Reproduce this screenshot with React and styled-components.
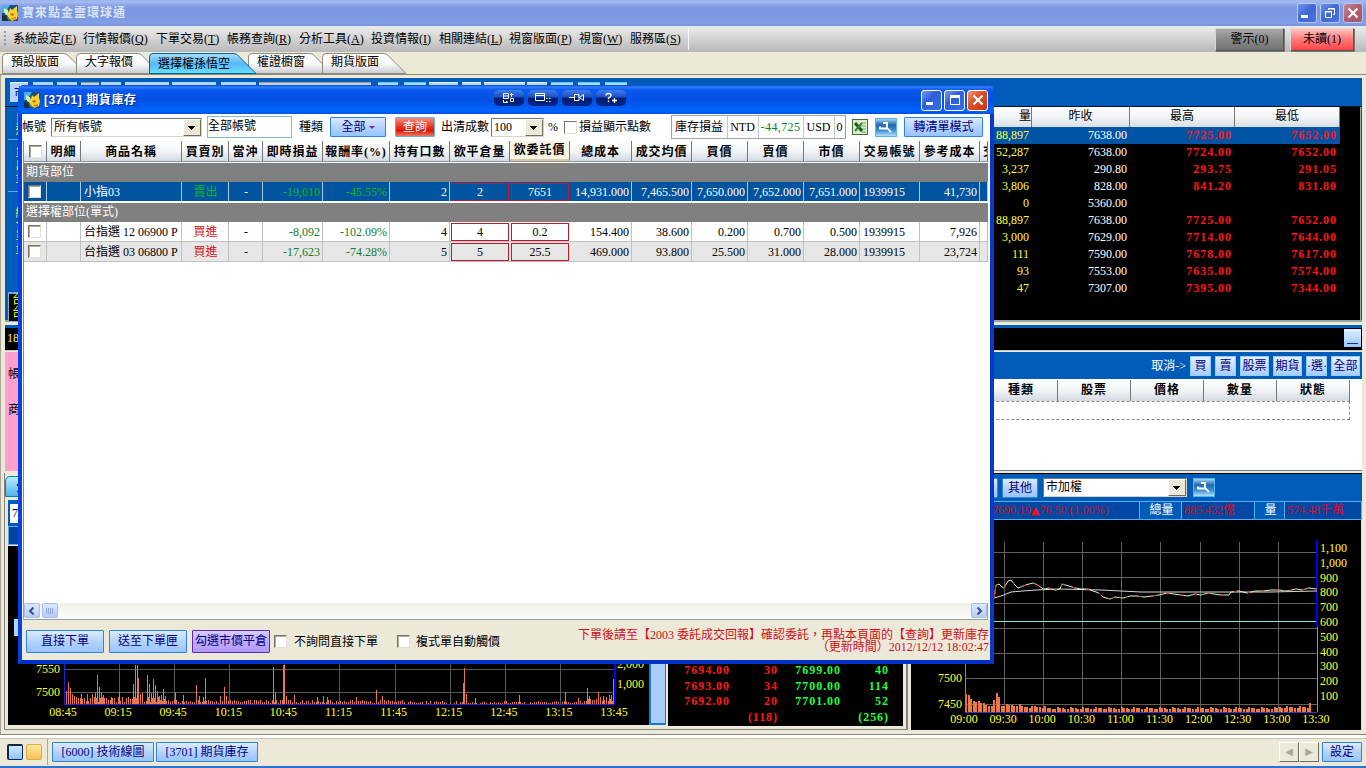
import React, { useState } from 'react';
import styled, { createGlobalStyle, css } from 'styled-components';

const GlobalStyle = createGlobalStyle`
  * {
    box-sizing: border-box;
  }
  body {
    margin: 0;
    overflow: hidden;
    font-family: 'Liberation Serif', 'Noto Sans CJK TC', serif;
    font-size: 12px;
    line-height: 14px;
    color: #000;
    background: #ece9d8;
  }
  svg {
    display: block;
  }
`;

const Desktop = styled.div`
  position: relative;
  display: flex;
  flex-direction: column;
  width: 1366px;
  height: 768px;
  overflow: hidden;
  white-space: nowrap;
  background: #ece9d8;
`;

/* ---------- main title bar ---------- */

const TitleBar = styled.div`
  display: flex;
  align-items: center;
  flex: none;
  height: 26px;
  padding: 0 3px 0 2px;
  background: linear-gradient(#9cb4ee 0, #a3bbf1 2px, #7f9ae1 7px, #7b97e0 16px, #829fe8 23px, #7590dc 100%);
`;

const TitleText = styled.div`
  flex: 1;
  margin-left: 4px;
  font: bold 12px/16px 'Liberation Sans', 'Noto Sans CJK TC', sans-serif;
  letter-spacing: ${props => (props.$active ? 0.6 : 1)}px;
  color: ${props => (props.$active ? '#fff' : '#d8e4f8')};
  text-shadow: ${props => (props.$active ? '1px 1px 0 #0a2a90' : 'none')};
`;

const WindowButtons = styled.div`
  display: flex;
  gap: ${props => props.$gap}px;
`;

const buttonFill = {
  blue: 'linear-gradient(135deg, #7a9cf0, #2d5fdc 40%, #3a6be8)',
  close: 'linear-gradient(135deg, #f09a7c, #dd4a22 45%, #c83a14)',
  dimBlue: 'linear-gradient(135deg, #6c90e8, #4068d4 50%, #4c74e0)',
  dimClose: 'linear-gradient(135deg, #c88896, #b05c6c 50%, #a85868)',
};

const WindowButton = styled.div`
  width: ${props => props.$size}px;
  height: ${props => props.$size}px;
  border: 1px solid ${props => (props.$kind.startsWith('dim') ? '#b4c6f4' : '#fff')};
  border-radius: 3px;
  background: ${props => buttonFill[props.$kind]};
  display: flex;
  align-items: center;
  justify-content: center;
`;

/* ---------- menu ---------- */

const MenuBar = styled.div`
  display: flex;
  align-items: center;
  flex: none;
  height: 26px;
  padding: 0 12px 0 4px;
  background: linear-gradient(#ececec, #d8d8d8 40%, #b8b8b8);
`;

const Grip = styled.div`
  width: 2px;
  height: 16px;
  margin-right: 7px;
  background: repeating-linear-gradient(#9a9a9a 0 2px, transparent 2px 4px);
`;

const MenuItem = styled.div`
  width: ${props => props.$width}px;
  u {
    text-underline-offset: 1px;
  }
`;

const MenuEnd = styled.div`
  flex: 1;
  height: 22px;
  margin-left: 8px;
  border-left: 1px solid #f6f6f6;
`;

const NoticeButton = styled.div`
  width: ${props => props.$width}px;
  height: 23px;
  margin-left: 6px;
  line-height: 20px;
  text-align: center;
  border: 1px solid;
  border-color: #d8d8d8 #555 #555 #d8d8d8;
  box-shadow: 1px 1px 0 #777;
  background: ${props =>
    props.$alert
      ? 'linear-gradient(#ffc4c0, #ff8080 45%, #ff4444)'
      : 'linear-gradient(#a8a8a8, #8c8c8c 45%, #727272)'};
`;

/* ---------- layout tabs ---------- */

const TabRow = styled.div`
  display: flex;
  flex: none;
  height: 23px;
  padding: 1px 0 0 2px;
  border-bottom: 1px solid #8c8b80;
`;

const Tab = styled.div`
  position: relative;
  z-index: ${props => (props.$active ? 2 : 1)};
  width: ${props => props.$width}px;
  height: 21px;
  padding: ${props => (props.$active ? '4px' : '2px')} 0 0 9px;

  svg {
    position: absolute;
    left: 0;
    top: 0;
    z-index: -1;
    overflow: visible;
  }
`;

/* ---------- workspace ---------- */

const Workspace = styled.div`
  display: flex;
  flex-direction: column;
  flex: none;
  height: 659px;
  padding: 3px 4px 0;
  border-left: 1px solid #a8a597;
`;

const QuotePanel = styled.div`
  flex: none;
  height: 244px;
  display: flex;
  flex-direction: column;
  background: #005cb8;
  border-bottom: 2px solid #98a4a8;
`;

const QuoteToolbar = styled.div`
  display: flex;
  align-items: flex-start;
  height: 28px;
  padding: 4px 0 0 5px;
`;

const ToolChip = styled.div`
  width: ${props => props.$width}px;
  height: 20px;
  margin-right: ${props => props.$gap}px;
  padding: 3px 0 0 4px;
  overflow: hidden;
  color: #00007c;
  background: #b4d4ff;
  border-top: 1px solid ${props => props.$edge || '#9cd8f8'};
`;

const QuoteBody = styled.div`
  display: flex;
  flex: 1;
  min-height: 0;
  border-top: 1px solid #001428;
`;

const SideStrip = styled.div`
  display: flex;
  flex-direction: column;
  width: 30px;
  margin-left: 3px;
  color: #f0ff20;
`;

const SideTab = styled.div`
  flex: none;
  height: ${props => props.$height}px;
  padding: ${props => props.$top}px 0 0 5px;
  line-height: 13px;
  border-bottom: 1px solid #60a8e8;
  writing-mode: vertical-lr;
`;

const SideList = styled.div`
  flex: none;
  height: 28px;
  padding: 0 0 0 3px;
  line-height: 13px;
  background: #000;
  border: 1px solid #88a8c0;
  border-bottom: 0;
`;

const QuoteTable = styled.div`
  flex: 1;
  padding-right: 20px;
  background: #000;
  border-right: 1px solid #9aa;
  margin-right: 1px;
`;

const QuoteRow = styled.div`
  display: grid;
  grid-template-columns: 1fr 98px 105px 105px;
  height: ${props => (props.$head ? 20 : 17)}px;
  line-height: ${props => (props.$head ? 18 : 17)}px;
  text-align: ${props => (props.$head ? 'center' : 'right')};
  background: ${props => (props.$selected ? '#0054a6' : 'transparent')};
  ${props => props.$head && css`
    background: linear-gradient(#fff, #f2f5f8 50%, #d6dee6);
    > div {
      border-right: 1px solid #777;
    }
    > div:first-child {
      text-align: right;
    }
  `}
`;

const quoteColors = { volume: '#ffff30', close: '#fff', high: '#ff1414' };

const QuoteCell = styled.div`
  padding-right: 3px;
  color: ${props => quoteColors[props.$kind]};
  ${props => props.$kind === 'high' && css`
    font-weight: bold;
    letter-spacing: 0.95px;
  `}
`;

const TickerBar = styled.div`
  display: flex;
  flex: none;
  justify-content: space-between;
  height: 26px;
  margin-top: 3px;
  padding: 3px 1px 0 2px;
  color: #ffff30;
  background: #000;
  border: 0 solid #005cb8;
  border-width: 3px 0 0;
  border-bottom: 1px solid #c8c8c8;
`;

const MiniButton = styled.div`
  width: 17px;
  height: 18px;
  margin-top: -2px;
  padding: 14px 3px 0 3px;
  background: linear-gradient(#e0f0ff, #98c4ff);

  &::after {
    content: '';
    display: block;
    height: 1px;
    background: #203060;
  }
`;

const OrderPanel = styled.div`
  display: flex;
  flex: none;
  height: 119px;
  margin-top: 1px;
`;

const OrderForm = styled.div`
  flex: none;
  width: 300px;
  padding: 15px 3px;
  background: #ff9fcf;
`;

const FormLabel = styled.div`
  height: 36px;
`;

const OrderList = styled.div`
  flex: 1;
  background: #fff;
  border-bottom: 1px solid #708090;
`;

const OrderTools = styled.div`
  display: flex;
  align-items: center;
  justify-content: flex-end;
  gap: 4px;
  height: 27px;
  padding-right: 2px;
  color: #fff;
  background: #005cb8;
`;

const SmallButton = styled.div`
  width: ${props => props.$width}px;
  height: 20px;
  overflow: hidden;
  line-height: 18px;
  text-align: center;
  color: #00007c;
  background: linear-gradient(#e4f0ff, #a8ccff);
  border: 1px solid #8cd0ff;
`;

const OrderHead = styled.div`
  display: grid;
  grid-template-columns: 1fr repeat(4, 73px);
  height: 21px;
  margin: 1px 12px 0 0;
  font-weight: bold;
  letter-spacing: 1px;
  line-height: 20px;
  text-align: center;
  background: linear-gradient(#fff, #f2f5f8 50%, #d2d9e0);
  > div {
    border-right: 1px solid #777;
  }
  > div:first-child {
    padding-right: 23px;
    text-align: right;
  }
`;

const OrderEmptyRow = styled.div`
  height: 19px;
  margin-right: 12px;
  border: 1px dashed #888;
`;

const BottomPanes = styled.div`
  display: flex;
  flex: 1;
  margin-top: 2px;
`;

const LeftPane = styled.div`
  display: flex;
  flex-direction: column;
  flex: none;
  width: 904px;
  height: 257px;
  margin-left: -1px;
  border: 1px solid #85837a;
  border-top: 0;
  border-width: 0 2px 1px 1px;
`;

const BlueTab = styled.div`
  flex: none;
  width: 110px;
  height: 21px;
  margin-top: 3px;
  padding: 3px 0 0 10px;
  border: 1px solid #0080b8;
  border-radius: 5px 5px 0 0;
  background: linear-gradient(#b8ecff, #50b4ec);
`;

const FieldStrip = styled.div`
  flex: none;
  height: 26px;
  margin: 3px 0 0 3px;
  padding: 4px 0 0 2px;
  background: #005cb8;
`;

const SymbolInput = styled.div`
  width: 100px;
  height: 19px;
  padding: 2px;
  background: #fff;
`;

const HeadStrip = styled.div`
  flex: none;
  height: 19px;
  margin-left: 3px;
  background: #0044a0;
  border: 1px solid #60a8e8;
`;

const LeftCharts = styled.div`
  display: flex;
  flex: 1;
  min-height: 0;
  margin: 1px 3px 3px;
`;

const Splitter = styled.div`
  width: 17px;
  height: 179px;
  margin-right: 2px;
  background: #a8ceff;
  border: 1px solid #1478d4;
  border-width: 1px 1px 2px 2px;
`;

const BookTable = styled.div`
  display: grid;
  grid-template-columns: 62px 48px 63px 48px;
  grid-auto-rows: 15.8px;
  align-content: end;
  flex: 1;
  padding-bottom: 1px;
  font-weight: bold;
  letter-spacing: 0.95px;
  line-height: 16px;
  text-align: right;
  background: #000;
`;

const BookCell = styled.div`
  color: ${props => (props.$side === 'buy' ? '#ff1818' : '#20ff40')};
`;

const RightPane = styled.div`
  flex: 1;
  margin-left: 3px;
  border-top: 1px solid #000;
  overflow: hidden;
`;

const IndexTools = styled.div`
  display: flex;
  align-items: center;
  height: 27px;
  padding-left: 51px;
  background: #005cb8;
`;

const IndexInfo = styled.div`
  display: flex;
  height: 19px;
  line-height: 16px;
  color: #fff;
  background: #0048a4;
  border: 1px solid #50b0f0;
  border-width: 1px 0;
`;

const InfoCell = styled.div`
  width: ${props => props.$width}px;
  padding-left: ${props => props.$pad || 2}px;
  text-align: ${props => (props.$label ? 'center' : 'left')};
  color: ${props => (props.$label ? '#fff' : '#d80c28')};
  background: ${props => (props.$label ? '#005cb8' : 'transparent')};
  border-right: 1px solid #50b0f0;
`;

const UpMark = styled.span`
  font: 11px/14px 'DejaVu Sans', sans-serif;
  color: #ff1010;
`;

/* ---------- task bar ---------- */

const TaskBar = styled.div`
  display: flex;
  align-items: center;
  flex: 1;
  padding: 0 4px 0 7px;
  border-top: 1px solid #85837a;
  border-bottom: 2px solid #2c74d0;
  box-shadow: inset 0 3px 0 #fff, inset 0 4px 0 #c8c4b4;
`;

const TaskSquare = styled.div`
  width: 16px;
  height: 16px;
  margin: 3px 3px 0 0;
  border: 1px solid ${props => (props.$warm ? '#e0a848' : '#102848')};
  border-width: ${props => (props.$warm ? '1px' : '2px 1px 1px 2px')};
  border-radius: 2px;
  background: ${props =>
    props.$warm ? 'linear-gradient(#ffe8a0, #fcc050)' : 'linear-gradient(#d0e8ff, #90c4ff)'};
`;

const TaskDivider = styled.div`
  width: 1px;
  height: 26px;
  margin: 3px 4px 0 2px;
  background: #aca899;
`;

const TaskArrow = styled.div`
  width: 20px;
  height: 20px;
  margin-top: 3px;
  font: 10px/17px 'DejaVu Sans', sans-serif;
  text-align: center;
  color: #aca899;
  border: 1px solid;
  border-color: #fff #716f64 #716f64 #fff;
`;

const TaskArrows = styled.div`
  display: flex;
  margin-right: 3px;
`;

const Spacer = styled.div`
  flex: 1;
`;

const Button = styled.div`
  flex: none;
  width: ${props => props.$width}px;
  height: ${props => props.$height || 20}px;
  margin-top: ${props => props.$top || 0}px;
  margin-right: ${props => props.$gap || 0}px;
  line-height: ${props => (props.$height || 20) - 2}px;
  text-align: center;
  color: #00007c;
  border: 1px solid #2c84e8;
  border-radius: 1px;
  background: linear-gradient(#dcebff, #b4d4ff 50%, #98c4ff);
  ${props => props.$tone === 'violet' && css`
    border-color: #6028b8;
    background: linear-gradient(#d8ccff, #bcaaff 50%, #b09cf8);
  `}
  ${props => props.$tone === 'red' && css`
    color: #fff;
    border-color: #68b0e0;
    background: linear-gradient(#f09080, #e82818 55%, #d81808 70%, #f07860);
  `}
`;

/* ---------- inventory window ---------- */

const Window = styled.div`
  position: absolute;
  left: 18px;
  top: 85px;
  display: flex;
  flex-direction: column;
  width: 976px;
  height: 579px;
  border: 4px solid #0a3fe0;
  border-top: 0;
  border-right-color: #0838d0;
  border-bottom-color: #0030c8;
  border-radius: 7px 7px 0 0;
  background: #fff;
`;

const WindowTitle = styled.div`
  display: flex;
  align-items: center;
  flex: none;
  height: 29px;
  margin: 0 -4px;
  padding: 1px 6px 0;
  border-radius: 6px 6px 0 0;
  background: linear-gradient(#0848c8, #2c80ff 2px, #0c58ec 5px, #0050e4 15px, #0064ff 26px, #0050e0);
`;

const PillGroup = styled.div`
  display: flex;
  gap: 4px;
  margin: -4px 295px 0 0;
`;

const Pill = styled.div`
  width: 30px;
  height: 16px;
  padding: 2px 7px 0;
  border-radius: 5px;
  background: linear-gradient(#3c80f0, #1c4cc0 45%, #001c70 50%, #002488);
`;

const FilterBar = styled.div`
  display: flex;
  align-items: center;
  flex: none;
  height: 26px;
`;

const Label = styled.div`
  flex: none;
  width: ${props => props.$width}px;
`;

const Select = styled.div`
  flex: none;
  display: flex;
  justify-content: space-between;
  width: ${props => props.$width}px;
  height: 19px;
  margin-right: ${props => props.$gap}px;
  padding-left: 2px;
  line-height: 16px;
  color: #000;
  background: #fff;
  border: 1px solid;
  border-color: #77746a #d8d4c8 #d8d4c8 #77746a;

  &::after {
    content: '';
    width: 16px;
    border: 1px solid;
    border-color: #fff #716f64 #716f64 #fff;
    background:
      linear-gradient(#000, #000) 4px 6px / 7px 1px no-repeat,
      linear-gradient(#000, #000) 5px 7px / 5px 1px no-repeat,
      linear-gradient(#000, #000) 6px 8px / 3px 1px no-repeat,
      linear-gradient(#000, #000) 7px 9px / 1px 1px no-repeat,
      #ece9d8;
  }
`;

const TextBox = styled.div`
  flex: none;
  width: 85px;
  height: 22px;
  margin-right: 7px;
  line-height: 19px;
  border: 1px solid #80b8d8;
`;

const Checkbox = styled.div`
  flex: none;
  width: 13px;
  height: 13px;
  margin-right: ${props => props.$gap || 0}px;
  background: #fff;
  border: 1px solid;
  border-color: #77746a #e4e0d4 #e4e0d4 #77746a;
  box-shadow: ${props => (props.$deep ? 'inset 1px 1px 0 #b0ac9c' : 'none')};
`;

const CaretDown = styled.span`
  display: inline-block;
  margin-left: 3px;
  vertical-align: 2px;
  border: 3px solid transparent;
  border-top-color: #8020c0;
  border-bottom: 0;
`;

const Totals = styled.div`
  display: flex;
  flex: none;
  width: 175px;
  height: 24px;
  margin-right: 6px;
  line-height: 23px;
  border: 1px solid #98a4ac;
`;

const TotalCell = styled.div`
  width: ${props => props.$width}px;
  padding-right: 1px;
  text-align: center;
  color: ${props => (props.$loss ? '#108030' : '#000')};
  letter-spacing: ${props => props.$track || 0}px;
  border-left: ${props => (props.$first ? 0 : 1)}px solid #c8c8c8;
`;

const Grid = styled.div`
  flex: 1;
  margin: 1px 2px 0 1px;
  border-left: 1px solid #8a8a8a;
`;

const gridColumns = '23px 34px 101px 47px 34px 60px 67px 60px 60px 60px 62px 60px 56px 56px 56px 60px 60px 8px';

const GridHead = styled.div`
  display: grid;
  grid-template-columns: ${gridColumns};
  height: 21px;
  margin-bottom: 1px;
  font-weight: bold;
  letter-spacing: 0.9px;
  line-height: 20px;
  text-align: center;
  border-bottom: 1px solid #8c9298;
  background: linear-gradient(#fff, #f4f6f8 50%, #d2dae2);
`;

const HeadCell = styled.div`
  display: flex;
  align-items: center;
  justify-content: ${props => (props.$start ? 'flex-start' : 'center')};
  padding-top: 1px;
  padding-left: ${props => (props.$start ? 3 : 0)}px;
  overflow: hidden;
  border-right: 1px solid #777;
  ${props => props.$hot && css`
    padding-top: 0;
    background: #f6f2e4;
    border-bottom: 2px solid #d8c8a0;
  `}
`;

const GroupRow = styled.div`
  height: 19px;
  padding-left: 2px;
  line-height: 18px;
  color: #fff;
  background: #808080;
`;

const GridRow = styled.div`
  display: grid;
  grid-template-columns: ${gridColumns};
  height: 20px;
  line-height: 21px;
  color: ${props => (props.$selected ? '#fff' : '#000')};
  background: ${props => (props.$selected ? '#0054a0' : props.$odd ? '#e6e6e6' : '#fff')};
  border-bottom: 1px solid ${props => (props.$selected ? '#fff' : '#c0c0c0')};
  margin-bottom: ${props => (props.$selected ? 1 : 0)}px;
`;

const toneColors = { gain: '#d81020', loss: '#108030', sell: '#10b818' };

const Cell = styled.div`
  padding: 0 2px 0 3px;
  overflow: hidden;
  text-align: ${props => props.$align || 'right'};
  color: ${props => toneColors[props.$tone] || 'inherit'};
  border-right: 1px solid ${props => (props.$selected ? '#a8c8e8' : '#c0c0c0')};
`;

const CheckCell = styled(Cell)`
  padding: 3px 0 0 4px;
`;

const EditCell = styled.div`
  height: 18px;
  margin: 1px 1px 0 1px;
  line-height: 17px;
  text-align: center;
  border: 1px solid #c01828;
`;

const ScrollBar = styled.div`
  display: flex;
  flex: none;
  height: 17px;
  margin: 0 2px 0 1px;
  background: linear-gradient(#f0efe8, #fdfdfa);
  border: 1px solid #8ca0b0;
  border-top: 0;
`;

const ScrollButton = styled.div`
  width: 16px;
  height: 15px;
  margin-right: 2px;
  display: flex;
  align-items: center;
  justify-content: center;
  border: 1px solid #a8bce8;
  border-radius: 2px;
  background: linear-gradient(#dce8ff, #b8ccf8);

  &:last-child {
    margin-right: 0;
  }
`;

const WindowFooter = styled.div`
  display: flex;
  align-items: center;
  flex: none;
  height: 40px;
  padding: 3px 1px 0 4px;
  background: #ece9d8;
`;

const Notice = styled.div`
  flex: 1;
  margin-top: -1px;
  line-height: 12px;
  text-align: right;
  color: #d01018;
`;

/* ---------- data ---------- */

const menu = [
  ['系統設定', 'E', 70],
  ['行情報價', 'Q', 73],
  ['下單交易', 'T', 71],
  ['帳務查詢', 'R', 72],
  ['分析工具', 'A', 72],
  ['投資情報', 'I', 68],
  ['相關連結', 'L', 70],
  ['視窗版面', 'P', 70],
  ['視窗', 'W', 51],
  ['服務區', 'S', 50],
];

const tabs = [
  { name: '預設版面', width: 74, shape: 84 },
  { name: '大字報價', width: 73, shape: 84 },
  { name: '選擇權孫悟空', width: 99, shape: 107 },
  { name: '權證櫥窗', width: 74, shape: 84 },
  { name: '期貨版面', width: 84, shape: 84 },
];

const quotes = [
  ['88,897', '7638.00', '7725.00', '7652.00'],
  ['52,287', '7638.00', '7724.00', '7652.00'],
  ['3,237', '290.80', '293.75', '291.05'],
  ['3,806', '828.00', '841.20', '831.80'],
  ['0', '5360.00', '', ''],
  ['88,897', '7638.00', '7725.00', '7652.00'],
  ['3,000', '7629.00', '7714.00', '7644.00'],
  ['111', '7590.00', '7678.00', '7617.00'],
  ['93', '7553.00', '7635.00', '7574.00'],
  ['47', '7307.00', '7395.00', '7344.00'],
];

// width, gap after, top edge colour
const chips = [
  [18, 5, '#e8f4ff'], [20, 4], [20, 4], [18, 2, '#a89880'], [20, 4], [44, 3], [44, 5], [35, 3],
  [112, 7, '#b09888'], [20, 6, '#40d8ff'], [22, 3, '#40d8ff'], [29, 4, '#e8f4ff'], [19, 3, '#e8f4ff'],
  [41, 2, '#e8f4ff'], [20, 4, '#e8f4ff'], [22, 5, '#40d8ff'], [22, 5, '#40d8ff'], [22, 0, '#40d8ff'],
];

const gridHeads = [
  '明細', '商品名稱', '買賣別', '當沖', '即時損益', '報酬率(%)', '持有口數', '欲平倉量', '欲委託價',
  '總成本', '成交均價', '買價', '賣價', '市價', '交易帳號', '參考成本',
];

const positions = [
  {
    group: '期貨部位',
    rows: [
      ['小指03', '賣出', '-', '-19,010', '-45.55%', '2', '2', '7651', '14,931.000', '7,465.500', '7,650.000', '7,652.000', '7,651.000', '1939915', '41,730'],
    ],
  },
  {
    group: '選擇權部位(單式)',
    rows: [
      ['台指選 12 06900 P', '買進', '-', '-8,092', '-102.09%', '4', '4', '0.2', '154.400', '38.600', '0.200', '0.700', '0.500', '1939915', '7,926'],
      ['台指選 03 06800 P', '買進', '-', '-17,623', '-74.28%', '5', '5', '25.5', '469.000', '93.800', '25.500', '31.000', '28.000', '1939915', '23,724'],
    ],
  },
];

const book = [
  ['7694.00', '30', '7699.00', '40'],
  ['7693.00', '34', '7700.00', '114'],
  ['7692.00', '20', '7701.00', '52'],
  ['', '(118)', '', '(256)'],
];

// busiest minutes of the session: x, height
const futuresPeaks = [
  [56, 33], [58, 13], [60, 22], [62, 16], [64, 10], [66, 8], [73, 10], [79, 10], [84, 10], [87, 11],
  [89, 29], [91, 17], [93, 12], [95, 9], [103, 7], [111, 12], [125, 20], [127, 39], [129, 39], [130, 26],
  [132, 10], [134, 11], [139, 29], [141, 20], [143, 11], [145, 25], [147, 19], [149, 13], [151, 8],
  [153, 9], [155, 15], [157, 8], [167, 12], [175, 9], [188, 19], [191, 8], [195, 7], [197, 26], [212, 8],
  [216, 17], [218, 8], [265, 37], [267, 12], [275, 39], [276, 39], [278, 8], [286, 9], [309, 7], [315, 8], [319, 7],
  [348, 7], [368, 14], [374, 8], [455, 21], [456, 36], [458, 10], [467, 6], [511, 9], [557, 12], [570, 6],
  [579, 16], [581, 8], [590, 12], [592, 7], [595, 8], [598, 7], [601, 9], [603, 9], [605, 25],
];

const futuresBars = Array.from({ length: 275 }, (_, i) => {
  const noise = (i * 37 + ((i * i) % 11) * 5) % 7;
  if (i < 55) return 2 + noise * 0.9;
  if (i < 170) return 1.5 + noise * 0.5;
  return 0.5 + noise * 0.35 + (i > 260 ? 2.5 : 0);
});

const indexBars = Array.from({ length: 136 }, (_, i) => {
  if (i === 135) return 9;
  if (i < 8) return [18, 17, 13, 11, 10, 11, 9, 9][i];
  if (i === 11) return 12;
  if (i === 12) return 19;
  if (i === 13) return 15;
  const base = i < 22 ? 6 : i < 32 ? 4.5 : i > 122 ? 4 : 2.6;
  return base + ((i * 29) % 5) * 0.5;
});

const priceLine =
  '83,78 85,65 88,64 91,67 93,68 97,61 100,60 103,64 107,68 112,66 118,64 122,63 127,65 132,69 138,68 144,70 149,69 151,64 158,66 164,68 170,69 177,69 182,71 188,73 192,77 199,79 204,77 212,78 219,76 226,76 233,77 241,76 248,75 256,73 263,74 270,75 277,76 284,74 290,75 297,73 303,74 310,75 318,75 320,72 328,71 336,73 344,71 352,71 360,70 368,70 376,71 385,69 391,70 398,68 406,69';

const averageLine = '83,78 90,76 100,72 112,71 125,70 148,69 190,70 230,72 270,72 320,72 360,72 406,71';

/* ---------- icons ---------- */

const Logo = () => (
  <svg width="16" height="16" viewBox="0 0 16 16">
    <rect width="16" height="16" fill="#1c5078" />
    <path d="M0 0h8L3 8H0z" fill="#48b0e8" />
    <path d="M0 10l4 1 2 5H0z" fill="#183048" />
    <path d="M8 3l2 2 5-4v5l1 3-1 5-5 2-4-2-1-4 2-3z" fill="#f8d428" />
    <path d="M2 3l4 2 1 4-3 1-2-3z" fill="#e0eca0" />
    <path d="M8 9l3-1 1 2-2 1z" fill="#c86818" />
    <path d="M9 13l5-1v2l-3 1z" fill="#e08830" />
    <path d="M5 11l2 3 3 2" stroke="#187838" fill="none" />
  </svg>
);

const MinIcon = () => (
  <svg width="14" height="14"><path d="M1 9h7v3H1z" fill="#fff" /></svg>
);

const MaxIcon = () => (
  <svg width="14" height="14"><path d="M2 2.5h10M2.5 2v10M11.5 2v10M2 11.5h10" stroke="#fff" /><path d="M2 2h10v3H2z" fill="#fff" /></svg>
);

const RestoreIcon = () => (
  <svg width="14" height="14" fill="none" stroke="#fff"><path d="M5.5 4V2.5h6v6H10M5 3h7M2.5 5.5h6v6h-6zM2 6h7" /></svg>
);

const CloseIcon = () => (
  <svg width="14" height="14"><path d="M2.5 2.5l9 9M11.5 2.5l-9 9" stroke="#fff" strokeWidth="2.2" /></svg>
);

const Pills = () => (
  <PillGroup>
    <Pill>
      <svg width="16" height="12" fill="none" stroke="#fff"><path d="M2.5 1.5h5v5h-5zM2 4h5M2.5 8v2.5h4M10.5 1v4M9 2.5h3.5M9.5 6.5h3v3h-3zM5 9l2 1.5" /></svg>
    </Pill>
    <Pill>
      <svg width="16" height="12" fill="none" stroke="#fff"><path d="M.5 1.5h9v7h-9zM0 3.5h9M11 6.5h1.5M14 6.5h1.5M11 9.5h1.5M14 9.5h1.5" /></svg>
    </Pill>
    <Pill>
      <svg width="16" height="12" fill="none" stroke="#fff"><path d="M0 5.5h5M5.5 2v7M5 2.5h5v6H5M10.5 5.5l4-3v6z" /></svg>
    </Pill>
    <Pill>
      <svg width="16" height="12" fill="none" stroke="#fff" strokeWidth="1.4"><path d="M3 3.5Q3 1.5 5.5 1.5T8 3.5Q8 5 5.5 6v1.2M5.5 8.5v1.5M9 8.5h5M11.5 6v5" /></svg>
    </Pill>
  </PillGroup>
);

const ToolIcon = styled.svg`
  flex: none;
  margin-right: ${props => props.$gap || 0}px;
`;

const WrenchIcon = ({ gap }) => (
  <ToolIcon $gap={gap} width="22" height="19" viewBox="0 0 22 19">
    <defs>
      <linearGradient id="wrench" x2="0" y2="1">
        <stop offset="0" stopColor="#b4dcf8" />
        <stop offset=".35" stopColor="#2468b0" />
        <stop offset=".65" stopColor="#3c8cd0" />
        <stop offset="1" stopColor="#b8e8ff" />
      </linearGradient>
    </defs>
    <rect x=".5" y=".5" width="21" height="18" fill="url(#wrench)" stroke="#50b8f0" />
    <path d="M8 5h4v5.5H5V8.5M12 10l4 4" stroke="#fff" strokeWidth="1.8" fill="none" />
  </ToolIcon>
);

const ExcelIcon = () => (
  <ToolIcon $gap={7} width="16" height="16">
    <rect x=".5" y=".5" width="15" height="15" fill="#dceccc" stroke="#387038" />
    <path d="M9 4h5M9 7h5M9 10h5M9 13h5" stroke="#68a868" />
    <path d="M3 4l7 8" stroke="#185c20" strokeWidth="3" />
    <path d="M10 4l-7 8" stroke="#38883c" strokeWidth="2" />
  </ToolIcon>
);

const TabShape = ({ width, active }) => (
  <svg width={width} height="21">
    <defs>
      <linearGradient id={active ? 'tabOn' : 'tabOff'} x2="0" y2="1">
        <stop offset="0" stopColor={active ? '#a8e0ff' : '#fff'} />
        <stop offset=".5" stopColor={active ? '#58b8f8' : '#fafafa'} />
        <stop offset="1" stopColor={active ? '#68e0ff' : '#c8ccd0'} />
      </linearGradient>
    </defs>
    <path
      d={`M.5 20.5V4Q.5 .5 4 .5H${width - 22}q3 0 5 3L${width} 20.5z`}
      fill={`url(#${active ? 'tabOn' : 'tabOff'})`}
      stroke={active ? '#006898' : '#8c8b80'}
    />
  </svg>
);

/* ---------- charts ---------- */

const AxisText = styled.text`
  fill: #ffff30;
  font-size: 12px;
  text-anchor: ${props => props.$anchor || 'start'};
`;

const futuresTimes = ['08:45', '09:15', '09:45', '10:15', '10:45', '11:15', '11:45', '12:15', '12:45', '13:15', '13:45'];

const FuturesChart = () => (
  <svg width="641" height="179" shapeRendering="crispEdges">
    <rect width="641" height="179" fill="#000" />
    <rect x="6" y="73" width="12" height="17" fill="#a8d4ff" />
    <g stroke="#585858">
      <path d="M56 123.5h550M56 146.5h550" />
      {futuresTimes.slice(1, 10).map((t, i) => (
        <path key={t} d={`M${111.5 + i * 55.1} 60v98`} />
      ))}
    </g>
    <g fill="#e8784c">
      {futuresBars.map((h, i) => (
        <rect key={i} x={56 + i * 2} y={158 - h} width="1" height={h} />
      ))}
      {futuresPeaks.map(([x, h]) => (
        <rect key={x} x={x} y={158 - h} width="1" height={h} />
      ))}
    </g>
    <path d="M56.5 60v98M56 158.5h551" stroke="#2020e0" />
    <path d="M607 60v98" stroke="#0000ff" strokeWidth="2" />
    <AxisText x="52" y="127" $anchor="end">7550</AxisText>
    <AxisText x="52" y="150" $anchor="end">7500</AxisText>
    <AxisText x="609" y="122">2,000</AxisText>
    <AxisText x="609" y="142">1,000</AxisText>
    {futuresTimes.map((t, i) => (
      <AxisText key={t} x={55 + i * 55.1} y="170" $anchor="middle">{t}</AxisText>
    ))}
  </svg>
);

const indexTimes = ['09:00', '09:30', '10:00', '10:30', '11:00', '11:30', '12:00', '12:30', '13:00', '13:30'];
const indexScale = ['1,100', '1,000', '900', '800', '700', '600', '500', '400', '300', '200', '100'];

const IndexChart = () => (
  <svg width="450" height="210" shapeRendering="crispEdges">
    <rect width="450" height="210" fill="#000" />
    <g stroke="#606060">
      {[32, 57, 83, 108, 133, 158, 184].map(y => (
        <path key={y} d={`M54 ${y + 0.5}h352`} />
      ))}
      {indexTimes.slice(1, 9).map((t, i) => (
        <path key={t} d={`M${93.5 + i * 39.1} 22v170`} />
      ))}
    </g>
    {indexBars.map((h, i) => (
      <rect key={i} x={54 + i * 2.55} y={192 - h} width="2" height={h} fill="#f07840" />
    ))}
    <path d="M54 101.5h352" stroke="#78e8d8" />
    <path d="M54.5 22v170" stroke="#b060e0" />
    <path d="M406 20v87" stroke="#0000ff" strokeWidth="2" />
    <path d="M406.5 107v85" stroke="#c070e8" />
    <path d="M54 192.5h352" stroke="#4030c0" />
    <g fill="none" shapeRendering="auto">
      <polyline points={averageLine} stroke="#d8d8d8" />
      <polyline points={priceLine} stroke="#f0ead8" />
      <polyline points={priceLine} stroke="#30b840" strokeDasharray="3 9" />
      <polyline points={priceLine} stroke="#e02020" strokeDasharray="3 11" strokeDashoffset="6" />
      <path d="M83 78l2-13" stroke="#e02020" />
    </g>
    {indexScale.map((t, i) => (
      <AxisText key={t} x="409" y={32 + i * 14.8}>{t}</AxisText>
    ))}
    <AxisText x="51" y="162" $anchor="end">7500</AxisText>
    <AxisText x="51" y="188" $anchor="end">7450</AxisText>
    {indexTimes.map((t, i) => (
      <AxisText key={t} x={53 + i * 39.1} y="203" $anchor="middle">{t}</AxisText>
    ))}
  </svg>
);

/* ---------- sections ---------- */

const cellAlign = { 0: 'left', 1: 'center', 2: 'center', 13: 'left' };

const PositionRow = ({ row, selected, odd, onSelect }) => {
  const toneFor = i => {
    if (i === 1) return row[1] === '賣出' ? 'sell' : 'gain';
    if (i === 3 || i === 4) return selected ? 'sell' : 'loss';
    return undefined;
  };

  return (
    <GridRow $selected={selected} $odd={odd} onClick={onSelect}>
      <CheckCell $selected={selected}><Checkbox $deep /></CheckCell>
      <Cell $selected={selected} />
      {row.map((value, i) =>
        i === 6 || i === 7 ? (
          <EditCell key={i}>{value}</EditCell>
        ) : (
          <Cell key={i} $selected={selected} $align={cellAlign[i]} $tone={toneFor(i)}>
            {value}
          </Cell>
        )
      )}
      <Cell $selected={selected} />
    </GridRow>
  );
};

const InventoryWindow = () => {
  const [selected, setSelected] = useState('小指03');

  return (
    <Window>
      <WindowTitle>
        <Logo />
        <TitleText $active>[3701] 期貨庫存</TitleText>
        <Pills />
        <WindowButtons $gap={2}>
          <WindowButton $size={21} $kind="blue"><MinIcon /></WindowButton>
          <WindowButton $size={21} $kind="blue"><MaxIcon /></WindowButton>
          <WindowButton $size={21} $kind="close"><CloseIcon /></WindowButton>
        </WindowButtons>
      </WindowTitle>
      <FilterBar>
        <Label $width={29}>帳號</Label>
        <Select $width={151} $gap={5}>所有帳號</Select>
        <TextBox>全部帳號</TextBox>
        <Label $width={31}>種類</Label>
        <Button $width={56} $gap={9}>全部<CaretDown /></Button>
        <Button $width={40} $gap={6} $tone="red">查詢</Button>
        <Label $width={50}>出清成數</Label>
        <Select $width={53} $gap={4}>100</Select>
        <Label $width={16}>%</Label>
        <Checkbox $gap={2} />
        <Label $width={92}>損益顯示點數</Label>
        <Totals>
          <TotalCell $first $width={55}>庫存損益</TotalCell>
          <TotalCell $width={31}>NTD</TotalCell>
          <TotalCell $width={45} $loss $track={0.4}>-44,725</TotalCell>
          <TotalCell $width={31}>USD</TotalCell>
          <TotalCell $width={11}>0</TotalCell>
        </Totals>
        <ExcelIcon />
        <WrenchIcon gap={7} />
        <Button $width={79}>轉清單模式</Button>
      </FilterBar>
      <Grid>
        <GridHead>
          <HeadCell><Checkbox $deep /></HeadCell>
          {gridHeads.map(name => (
            <HeadCell key={name} $hot={name === '欲委託價'}>{name}</HeadCell>
          ))}
          <HeadCell $start>交</HeadCell>
        </GridHead>
        {positions.map(({ group, rows }) => (
          <React.Fragment key={group}>
            <GroupRow>{group}</GroupRow>
            {rows.map((row, i) => (
              <PositionRow
                key={row[0]}
                row={row}
                odd={i % 2 === 1}
                selected={row[0] === selected}
                onSelect={() => setSelected(row[0])}
              />
            ))}
          </React.Fragment>
        ))}
      </Grid>
      <ScrollBar>
        <ScrollButton>
          <svg width="8" height="8"><path d="M5.5 .5L2 4l3.5 3.5" stroke="#385080" strokeWidth="2" fill="none" /></svg>
        </ScrollButton>
        <ScrollButton>
          <svg width="8" height="8"><path d="M.5 1v6M2.5 1v6M4.5 1v6M6.5 1v6" stroke="#8ca8e8" /></svg>
        </ScrollButton>
        <Spacer />
        <ScrollButton>
          <svg width="8" height="8"><path d="M2.5 .5L6 4 2.5 7.5" stroke="#385080" strokeWidth="2" fill="none" /></svg>
        </ScrollButton>
      </ScrollBar>
      <WindowFooter>
        <Button $width={78} $height={23} $gap={5}>直接下單</Button>
        <Button $width={78} $height={23} $gap={5}>送至下單匣</Button>
        <Button $width={78} $height={23} $gap={4} $tone="violet">勾選市價平倉</Button>
        <Checkbox $deep $gap={7} />
        <Label $width={103}>不詢問直接下單</Label>
        <Checkbox $deep $gap={6} />
        <Label $width={85}>複式單自動觸價</Label>
        <Notice>
          <div>下單後請至【2003 委託成交回報】確認委託，再點本頁面的【查詢】更新庫存</div>
          <div>（更新時間）2012/12/12 18:02:47</div>
        </Notice>
      </WindowFooter>
    </Window>
  );
};

const App = () => (
  <>
    <GlobalStyle />
    <Desktop>
      <TitleBar>
        <Logo />
        <TitleText>寶來點金靈環球通</TitleText>
        <WindowButtons $gap={3}>
          <WindowButton $size={20} $kind="dimBlue"><MinIcon /></WindowButton>
          <WindowButton $size={20} $kind="dimBlue"><RestoreIcon /></WindowButton>
          <WindowButton $size={20} $kind="dimClose"><CloseIcon /></WindowButton>
        </WindowButtons>
      </TitleBar>
      <MenuBar>
        <Grip />
        {menu.map(([name, hotkey, width]) => (
          <MenuItem key={name} $width={width}>
            {name}(<u>{hotkey}</u>)
          </MenuItem>
        ))}
        <MenuEnd />
        <NoticeButton $width={69}>警示(0)</NoticeButton>
        <NoticeButton $width={64} $alert>未讀(1)</NoticeButton>
      </MenuBar>
      <TabRow>
        {tabs.map(({ name, width, shape }) => (
          <Tab key={name} $width={width} $active={name === '選擇權孫悟空'}>
            <TabShape width={shape} active={name === '選擇權孫悟空'} />
            {name}
          </Tab>
        ))}
      </TabRow>
      <Workspace>
        <QuotePanel>
          <QuoteToolbar>
            {chips.map(([width, gap, edge], i) => (
              <ToolChip key={i} $width={width} $gap={gap} $edge={edge}>{i === 0 ? '市' : ''}</ToolChip>
            ))}
          </QuoteToolbar>
          <QuoteBody>
            <SideStrip>
              <SideTab $height={33} $top={4}>自選</SideTab>
              <SideTab $height={52} $top={7}>單出量</SideTab>
              <SideTab $height={101} $top={14}>綜合單量</SideTab>
              <SideList>
                <div>台</div>
                <div>台</div>
              </SideList>
            </SideStrip>
            <QuoteTable>
              <QuoteRow $head>
                <div>量</div>
                <div>昨收</div>
                <div>最高</div>
                <div>最低</div>
              </QuoteRow>
              {quotes.map(([volume, close, high, low], i) => (
                <QuoteRow key={i} $selected={i === 0}>
                  <QuoteCell $kind="volume">{volume}</QuoteCell>
                  <QuoteCell $kind="close">{close}</QuoteCell>
                  <QuoteCell $kind="high">{high}</QuoteCell>
                  <QuoteCell $kind="high">{low}</QuoteCell>
                </QuoteRow>
              ))}
            </QuoteTable>
          </QuoteBody>
        </QuotePanel>
        <TickerBar>
          <div>18</div>
          <MiniButton />
        </TickerBar>
        <OrderPanel>
          <OrderForm>
            <FormLabel>帳</FormLabel>
            <FormLabel>商</FormLabel>
          </OrderForm>
          <OrderList>
            <OrderTools>
              <div>取消-&gt;</div>
              <SmallButton $width={21}>買</SmallButton>
              <SmallButton $width={21}>賣</SmallButton>
              <SmallButton $width={29}>股票</SmallButton>
              <SmallButton $width={29}>期貨</SmallButton>
              <SmallButton $width={21}>·選·</SmallButton>
              <SmallButton $width={29}>全部</SmallButton>
            </OrderTools>
            <OrderHead>
              <div>種類</div>
              <div>股票</div>
              <div>價格</div>
              <div>數量</div>
              <div>狀態</div>
            </OrderHead>
            <OrderEmptyRow />
          </OrderList>
        </OrderPanel>
        <BottomPanes>
          <LeftPane>
            <BlueTab>分</BlueTab>
            <FieldStrip><SymbolInput>77</SymbolInput></FieldStrip>
            <HeadStrip />
            <LeftCharts>
              <FuturesChart />
              <Splitter />
              <BookTable>
                {book.map((row, r) =>
                  row.map((value, c) => (
                    <BookCell key={`${r}-${c}`} $side={c < 2 ? 'buy' : 'sell'}>{value}</BookCell>
                  ))
                )}
              </BookTable>
            </LeftCharts>
          </LeftPane>
          <RightPane>
            <IndexTools>
              <Button $width={36} $gap={4}>上櫃</Button>
              <Button $width={36} $gap={5}>其他</Button>
              <Select $width={144} $gap={6}>市加權</Select>
              <WrenchIcon />
            </IndexTools>
            <IndexInfo>
              <InfoCell $width={229} $pad={81}>7690.19<UpMark>▲</UpMark>76.50 (1.00%)</InfoCell>
              <InfoCell $width={42} $label>總量</InfoCell>
              <InfoCell $width={73}>885.432億</InfoCell>
              <InfoCell $width={30} $label>量</InfoCell>
              <InfoCell $width={77}>574.48千萬</InfoCell>
            </IndexInfo>
            <IndexChart />
          </RightPane>
        </BottomPanes>
      </Workspace>
      <TaskBar>
        <TaskSquare />
        <TaskSquare $warm />
        <TaskDivider />
        <Button $width={102} $gap={2} $top={3}>[6000] 技術線圖</Button>
        <Button $width={102} $top={3}>[3701] 期貨庫存</Button>
        <Spacer />
        <TaskArrows>
          <TaskArrow>◀</TaskArrow>
          <TaskArrow>▶</TaskArrow>
        </TaskArrows>
        <Button $width={40} $top={3}>設定</Button>
      </TaskBar>
      <InventoryWindow />
    </Desktop>
  </>
);

export default App;
